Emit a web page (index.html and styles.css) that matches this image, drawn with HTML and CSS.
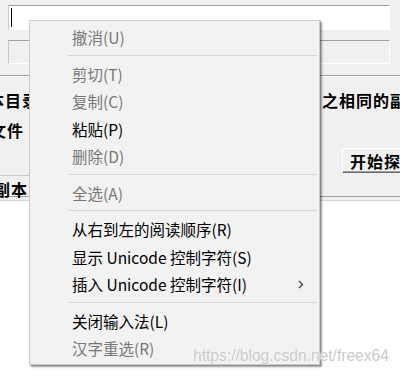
FILE: index.html
```html
<!DOCTYPE html>
<html lang="zh-CN">
<head>
    <meta charset="UTF-8">
    <meta name="viewport" content="width=device-width, initial-scale=1.0">
    <title>查找副本</title>
    <link rel="stylesheet" href="styles.css">
</head>
<body>

<div class="window">
    <div class="fields">
        <div class="field field-edit"><span class="caret"></span></div>
        <div class="field field-readonly"></div>
    </div>
    <div class="rule"></div>

    <div class="info">
        <p class="line line-first">
            <span class="line-left">本目录下的所有文件中查找</span>
            <span class="line-right">与之相同的副本</span>
        </p>
        <p class="line line-second">文件</p>
        <div class="actions">
            <button class="btn-start">开始探测</button>
        </div>
    </div>

    <div class="list">
        <div class="list-head"><span class="col-head">副本</span></div>
        <div class="list-body"></div>
    </div>
</div>

<div class="context-menu">
    <div class="menu-item is-disabled">撤消(U)</div>
    <div class="menu-sep"></div>
    <div class="menu-item is-disabled">剪切(T)</div>
    <div class="menu-item is-disabled">复制(C)</div>
    <div class="menu-item">粘贴(P)</div>
    <div class="menu-item is-disabled">删除(D)</div>
    <div class="menu-sep"></div>
    <div class="menu-item is-disabled">全选(A)</div>
    <div class="menu-sep"></div>
    <div class="menu-item">从右到左的阅读顺序(R)</div>
    <div class="menu-item">显示 Unicode 控制字符(S)</div>
    <div class="menu-item has-submenu">
        <span>插入 Unicode 控制字符(I)</span>
        <svg class="submenu-arrow" width="6" height="9" viewBox="0 0 6 9">
            <path d="M1 1 L4.5 4.5 L1 8" fill="none" stroke="#404040" stroke-width="1.3"/>
        </svg>
    </div>
    <div class="menu-sep"></div>
    <div class="menu-item">关闭输入法(L)</div>
    <div class="menu-item is-disabled">汉字重选(R)</div>
</div>

<div class="watermark">https://blog.csdn.net/freex64</div>

</body>
</html>
```

FILE: styles.css
```css
* {
    box-sizing: border-box;
    margin: 0;
    padding: 0;
}

body {
    background: #f0f0f0;
    height: 379px;
    overflow: hidden;
    font-family: "Noto Sans CJK SC", "Liberation Sans", sans-serif;
    color: #000;
}

.window {
    display: flex;
    flex-direction: column;
    height: 100%;
}

.fields {
    padding: 5px 10px 0 8px;
    display: flex;
    flex-direction: column;
    gap: 10px;
}

.field {
    width: 382px;
    border-top: 1px solid #a0a0a0;
    border-left: 1px solid #c8c8c8;
    border-right: 1px solid #ffffff;
    border-bottom: 1px solid #ffffff;
}

.field-edit {
    height: 25px;
    background: #fff;
    padding: 2px 0 0 2px;
}

.caret {
    display: block;
    width: 1px;
    height: 19px;
    background: #000;
}

.field-readonly {
    height: 24px;
    background: #f0f0f0;
}

.rule {
    margin-top: 11px;
    border-top: 1px solid #a0a0a0;
    border-bottom: 1px solid #ffffff;
}

.info {
    font-weight: 700;
    font-size: 16px;
    letter-spacing: 1px;
}

.line {
    height: 24px;
    line-height: 24px;
    white-space: nowrap;
}

.line-first {
    margin-top: 11px;
    display: flex;
}

.line-left {
    width: 317px;
    margin-left: -12px;
    overflow: hidden;
    flex-shrink: 0;
}

.line-right {
    flex-shrink: 0;
}

.line-second {
    margin-top: 6px;
    margin-left: -10px;
}

.actions {
    margin-top: 6px;
    display: flex;
    padding-left: 342px;
}

.btn-start {
    flex-shrink: 0;
    width: 90px;
    height: 25px;
    background: #f0f0f0;
    border-top: 1px solid #ffffff;
    border-left: 1px solid #ffffff;
    border-right: 1px solid #696969;
    border-bottom: 1px solid #696969;
    box-shadow: inset -1px -1px 0 #a0a0a0;
    font-family: "Noto Sans CJK SC", sans-serif;
    font-weight: 700;
    font-size: 16px;
    letter-spacing: 1px;
    line-height: 22px;
    text-align: left;
    padding-left: 7px;
    white-space: nowrap;
}

.list {
    flex: 1;
    display: flex;
    flex-direction: column;
    margin-top: 2px;
}

.list-head {
    height: 22px;
    border-bottom: 1px solid #a0a0a0;
    font-weight: 700;
    font-size: 16px;
    letter-spacing: 1px;
}

.col-head {
    display: block;
    width: 80px;
    margin-left: -6px;
    border-top: 1px solid #c8c8c8;
    line-height: 26px;
    height: 21px;
    white-space: nowrap;
}

.list-body {
    flex: 1;
    margin-top: 3px;
    border-top: 1px solid #d4d4d4;
    background: #fff;
}

/* context menu lies over the dialog */
.context-menu {
    position: absolute;
    left: 29px;
    top: 20px;
    width: 291px;
    padding: 3px 0 1px;
    background: #f2f2f2;
    border: 1px solid #cccccc;
    box-shadow: 2px 2px 2px rgba(0, 0, 0, 0.35), 1px 1px 1px rgba(0, 0, 0, 0.2);
    font-size: 15.5px;
}

.menu-item {
    height: 27.5px;
    line-height: 27.5px;
    padding-left: 42px;
    padding-right: 15px;
    white-space: nowrap;
    display: flex;
    justify-content: space-between;
    align-items: center;
}

.menu-item.is-disabled {
    color: #777;
}

.submenu-arrow {
    display: block;
}

.menu-sep {
    height: 1px;
    margin: 3px 2px 5px 38px;
    background: #d7d7d7;
}

.watermark {
    position: absolute;
    left: 193px;
    top: 347px;
    font-family: "Liberation Sans", sans-serif;
    font-size: 15.6px;
    color: rgba(190, 190, 190, 0.85);
    text-shadow: 0 0 1px #fff, 0 0 1px #fff;
    white-space: nowrap;
}
```
